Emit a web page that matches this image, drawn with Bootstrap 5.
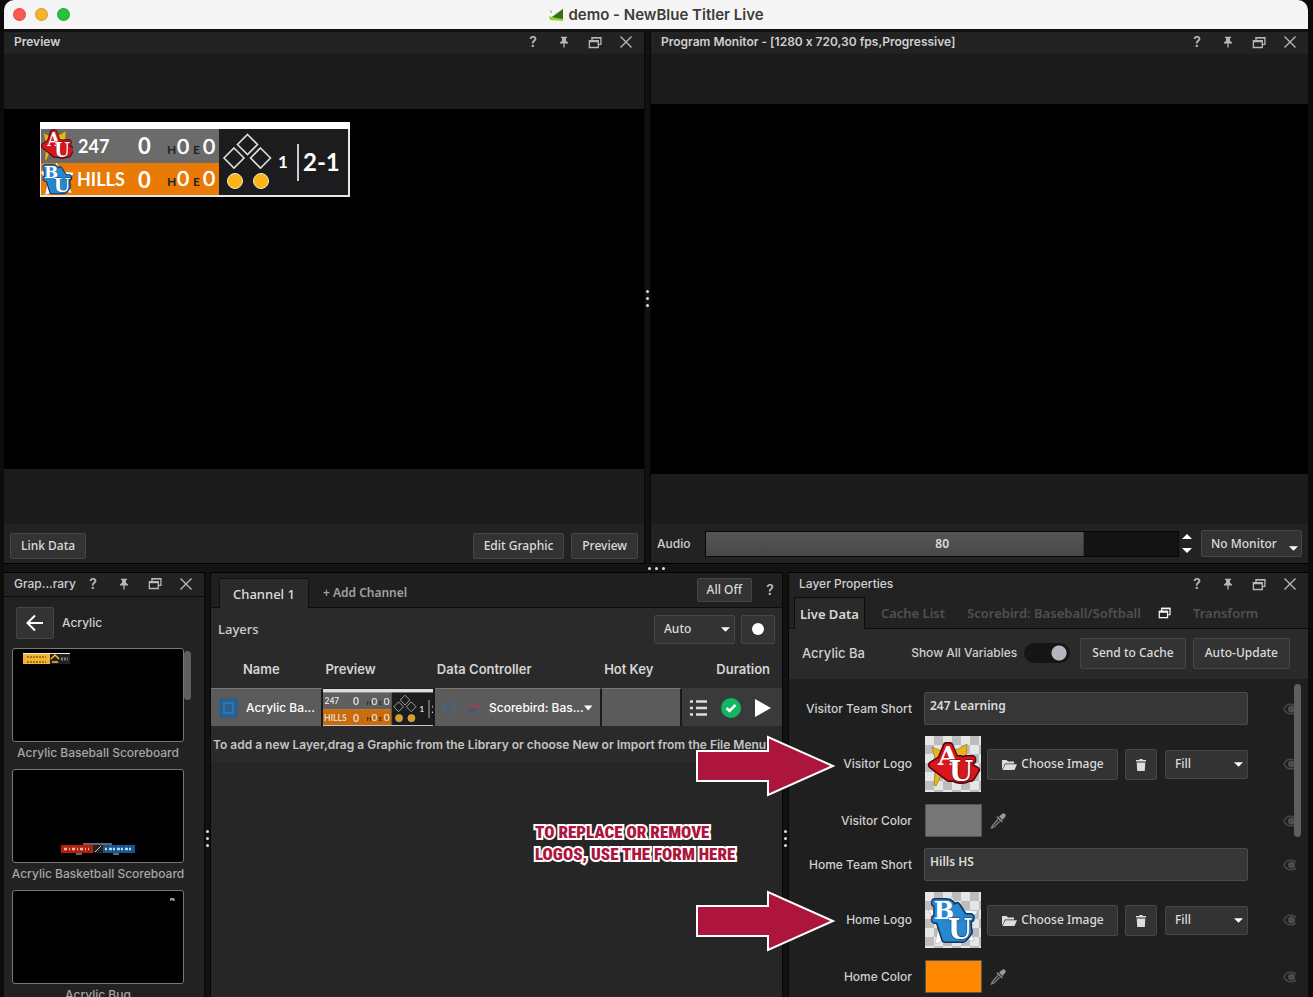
<!DOCTYPE html>
<html lang="en" data-bs-theme="dark">
<head>
<meta charset="utf-8">
<meta name="viewport" content="width=device-width, initial-scale=1">
<title>demo - NewBlue Titler Live</title>
<link href="https://cdn.jsdelivr.net/npm/bootstrap@5.3.0/dist/css/bootstrap.min.css" rel="stylesheet">
<style>
  :root { --ui: Inter, "Liberation Sans", sans-serif; --lucida: "Noto Sans", "Open Sans", sans-serif; }
  body { background: #0c0c0c; color: #cfcfcf; font: 500 12px/16px var(--ui); font-variant-ligatures: no-contextual; height: 100vh; overflow: hidden; }
  button, select, input { font: inherit; color: inherit; }
  .app { height: 100vh; margin: 0 5px 0 4px; }
  .titlebar { background: #f5f5f5; color: #3c3c3c; height: 29px; border-radius: 10px 10px 0 0; font-size: 15px; font-weight: 600; }
  .lights { left: 9px; top: 8px; gap: 9px; }
  .light { width: 13px; height: 13px; border-radius: 50%; border: 1px solid #0002; }
  .workspace { grid-template-rows: 532fr 8px 425fr; min-height: 0; padding-top: 3px; background: #111; }
  .top-row { grid-template-columns: 640fr 7px 657fr; min-height: 0; }
  .bottom-row { grid-template-columns: 200fr 7px 571fr 7px 519fr; min-height: 0; }
  .pane { background: #222; min-width: 0; min-height: 0; overflow: hidden; }
  .top-row .pane { border-bottom: 1px solid #000; }
  .bottom-row .pane { border-top: 1px solid #000; }
  .splitter { background: #111; border: solid #060606; border-width: 0 1px; }
  .low-dots { padding-top: 258px; }
  .hsplitter { background: #131313; }
  .dots { gap: 4px; }
  .dots i { width: 3px; height: 3px; border-radius: 50%; background: #ddd; }
  .pane-head { height: 22px; padding: 0 10px 2px; font-weight: 600; line-height: 20px; }
  .lib-head, .prop-head { height: 24px; font-weight: 500; }
  .lib-head { border-bottom: 1px solid #0a0a0a; }
  .tools { gap: 15px; }
  .icon-btn { width: 16px; height: 16px; padding: 0; border: 0; background: none; color: #b8b8b8; display: grid; place-items: center; font: 600 14px/16px var(--ui); }
  .stage { background: #1b1b1b; min-height: 0; }
  .screen { background: #000; width: 100%; aspect-ratio: 16 / 9; }
  .screen-pad { padding: 13px 36px; }
  .toolbar-row { height: 39px; gap: 7px; padding: 0 6px; }
  .left-tools { padding-top: 5px; }
  .key { font: 500 12px/16px var(--lucida); color: #dcdcdc; background: #333; border: 1px solid #464646; border-radius: 2px; padding: 4px 10px; }
  .key:hover { color: #fff; background: #3c3c3c; }
  .short { height: 24px; padding: 2px 9px; }
  .tall { height: 31px; padding: 4px 11px; }
  .pick { appearance: none; font: 500 12px/16px var(--lucida); color: #dcdcdc; border: 1px solid #464646; border-radius: 2px; padding: 4px 9px; height: 29px;
    background: #333 url("data:image/svg+xml,%3Csvg xmlns='http://www.w3.org/2000/svg' viewBox='0 0 10 5'%3E%3Cpath fill='%23fff' d='M0 0h10L5 5z'/%3E%3C/svg%3E") no-repeat right 4px center / 9px 5px; }
  .monitor-pick { width: 101px; height: 27px; background-position: right 3px bottom 5px; }
  .auto-pick { width: 81px; }
  .fill-pick { width: 83px; }
  .audio { height: 26px; border: 1px solid #080808; color: #dcdcdc; text-align: center; font: 600 12px/16px var(--lucida);
    background: linear-gradient(#555, #484848) 0 0 / var(--level) 100% no-repeat #131313; min-width: 0; }
  .spin { gap: 4px; width: 14px; margin-left: -6px; }
  .spin button { height: 10px; width: 10px; padding: 0; border: 0; background: none; display: grid; place-items: center; }
  .lib-body { padding: 10px 8px 0; }
  .back { width: 38px; height: 32px; padding: 0; display: grid; place-items: center; margin-left: 4px; }
  .thumbs { margin-top: 9px; width: 172px; }
  .thumb { height: 94px; background: #000; border: 1px solid #777; border-radius: 3px; }
  .thumb svg { display: block; width: 100%; height: 100%; }
  .thumbs figcaption { height: 27px; line-height: 22px; color: #a6a6a6; margin: 0 -6px; text-align: center; white-space: nowrap; }
  .sbar { width: 7px; border-radius: 4px; background: #5f5f5f; }
  .lib-sbar { height: 49px; margin-top: 12px; }
  .ch-bar { height: 35px; padding-left: 8px; border-bottom: 1px solid #0c0c0c; background: #1f1f1f; }
  .ch-tab { height: 30px; margin-bottom: -1px; padding: 0 13px; background: #2a2a2a; border: 1px solid #111; border-bottom: 0; font: 500 13px/28px var(--lucida); color: #dcdcdc; }
  .ch-add { border: 0; background: none; color: #a0a0a0; padding: 0 14px; height: 29px; font: 600 12px/30px var(--lucida); }
  .ch-help { margin: 0 4px 0 10px; }
  .layers { background: #2a2a2a; height: 154px; }
  .layer-head { height: 42px; padding: 0 7px; gap: 6px; font: 500 13px/16px var(--lucida); }
  .record { width: 34px; height: 29px; padding: 0; display: grid; place-items: center; }
  .grid-table { table-layout: fixed; width: 100%; border-collapse: separate; border-spacing: 0; }
  .grid-table th { height: 38px; padding: 0 2px; font-size: 13px; font-weight: 600; color: #d4d4d4; vertical-align: middle; white-space: nowrap; }
  .grid-table th:last-child { padding-right: 12px; }
  .grid-table td { height: 38px; padding: 0; background: #5b5b5b; border-right: 2px solid #1a1a1a; border-top: 1px solid #777; color: #fff; vertical-align: middle; white-space: nowrap; }
  .grid-table td:last-child { background: #3a3a3a; border-color: #3a3a3a; border-right: 0; padding-right: 3px; }
  .grid-table td:nth-child(2) { border-top: 0; background: #222; }
  .mini { display: block; width: 100%; height: 37px; opacity: .85; }
  .hint { white-space: nowrap; padding: 11px 2px 0; font-weight: 600; overflow: hidden; color: #c4c4c4; }
  .dark-fill { background: #262626; }
  .tabs { height: 32px; padding: 0 5px; gap: 10px; border-bottom: 1px solid #0c0c0c; font: 600 13px/16px var(--lucida); }
  .tabs button { border: 0; background: none; color: #505050; height: 31px; padding: 0 6px; white-space: nowrap; }
  .tabs .current { background: #2a2a2a; color: #d8d8d8; border: 1px solid #0c0c0c; border-bottom: 0; height: 32px; margin-bottom: -1px; padding: 0 5px; }
  .prop-bar { height: 50px; background: #2a2a2a; padding: 0 18px 2px 13px; gap: 7px; white-space: nowrap; }
  .bar-name { font-size: 13px; }
  .switch { appearance: none; width: 46px; height: 20px; border-radius: 10px; margin: 0 3px 0 0; background: radial-gradient(circle at 35px 10px, #b3b7bd 7px, #151515 8px); }
  .form-area { background: #1f1f1f; padding-top: 13px; }
  .fields { display: grid; row-gap: 12px; }
  .field { display: grid; grid-template-columns: 123px 1fr 48px; column-gap: 12px; align-items: center; height: 32px; }
  .logo-field { height: 56px; }
  .field > label, .field > .field-name { text-align: right; white-space: nowrap; }
  .field > svg { justify-self: end; margin-right: 12px; }
  .entry { width: 100%; height: 33px; padding: 0 5px 6px; background: #363636; border: 1px solid #4a4a4a; border-radius: 2px; font: 600 12px/16px var(--lucida); color: #dcdcdc; }
  .logo-pic { width: 56px; height: 56px; margin: 0 6px 0 1px; flex: none;
    background: repeating-conic-gradient(#bdbdbd 0 25%, #e6e6e6 0 50%) 0 0 / 18px 18px; }
  .choose { width: 131px; padding: 0; margin-right: 7px; }
  .trash { width: 32px; padding: 0; }
  .swatch { width: 57px; height: 33px; border: 1px solid #555; padding: 0; margin-left: 1px; background: var(--c); }
  .form-sbar { right: 7px; top: 5px; height: 153px; }
  .callout-arrow { width: 142px; height: 64px; right: 472px; }
  .arrow-a { top: 162px; }
  .arrow-b { top: 317px; }
  .callout-note { left: 531px; top: 249px; color: #ad153c; font: 900 17px/22px "Roboto Condensed", "Liberation Sans Narrow", sans-serif; white-space: nowrap; text-transform: uppercase;
    -webkit-text-stroke: 4px #fff; paint-order: stroke fill; }
</style>
</head>
<body>
<svg width="0" height="0" class="position-absolute" aria-hidden="true">
  <defs>
    <symbol id="pin" viewBox="0 0 16 16"><path fill="currentColor" d="M4.500 2h7v1.500h-1.300v3.200l2.300 1.600v1.400H8.700v4.500H7.300V9.700H3.500V8.300l2.300-1.600V3.500H4.500z"/></symbol>
    <symbol id="restore" viewBox="0 0 16 16"><path fill="none" stroke="currentColor" stroke-width="1.400" d="M2 6h9.500v7.300H2zM4.800 5.500V2.700h9.500V10h-2.500"/><path fill="currentColor" d="M2 5.500h9.500v2.300H2zM4.500 2h10v1.800h-10z"/></symbol>
    <symbol id="close" viewBox="0 0 16 16"><path fill="none" stroke="currentColor" stroke-width="1.400" d="M2.500 2.500l11 11M13.500 2.500l-11 11"/></symbol>
    <symbol id="eye" viewBox="0 0 16 12"><path fill="none" stroke="#4c4c4c" stroke-width="1.400" d="M1 6c3-6.500 11-6.500 14 0c-3 6.500-11 6.500-14 0z"/><circle cx="8.500" cy="6" r="3.500" fill="#4c4c4c"/></symbol>
    <symbol id="folder" viewBox="0 0 16 12"><path fill="#ddd" d="M1 9.500V1h4.500l1.500 1.500h6v2H4L1.800 9.500zM4.500 5.300H16l-2.500 5.700H1.500z"/></symbol>
    <symbol id="bin" viewBox="0 0 12 14"><path fill="#ddd" d="M1 2h3l.7-1h2.600L8 2h3v1.500H1zM1.700 4.500h8.600L9.800 13H2.200z"/></symbol>
    <symbol id="dropper" viewBox="0 0 16 16"><path fill="#999" d="M9 3.500l3.500 3.500 2.500-3a2 2 0 0 0-3-3z"/><path fill="#999" d="M7.500 3.200l5.300 5.300-1 1L6.500 4.200z"/><path fill="none" stroke="#888" stroke-width="1.200" d="M8 6.500l-5.500 6L1.500 15l2.500-1 5.700-5.700"/></symbol>
    <symbol id="logo-au" viewBox="0 0 56 56">
      <path fill="#e9b51c" stroke="#8d6a12" stroke-width=".6" d="M7 11l12 5 14-3 9-5-1 14 3 12-28 6-5 10-2-1 1-11 2-8z"/>
      <g font-family="DejaVu Serif, serif" font-weight="700" text-anchor="middle" stroke-linejoin="round">
        <g fill="#4d0407" stroke="#4d0407" stroke-width="8"><text x="23" y="29" font-size="26">A</text><text x="36" y="44" font-size="27">U</text><path d="M7 29l10-6 20 4 14 7-5 8H24z"/></g>
        <g fill="#d9161d" stroke="#d9161d" stroke-width="5"><text x="23" y="29" font-size="26">A</text><text x="36" y="44" font-size="27">U</text><path d="M7 29l10-6 20 4 14 7-5 8H24z"/></g>
        <text x="23" y="29" font-size="26" fill="#fff">A</text>
        <text x="36" y="45" font-size="28" fill="#fff" stroke="#7d0a0e" stroke-width="1.500" paint-order="stroke">U</text>
      </g>
    </symbol>
    <symbol id="logo-bu" viewBox="0 0 56 56">
      <path fill="#fff" stroke="#9aa" stroke-width=".5" d="M27 4l6 14 20 1-10 13 6 17-18-4-21 7 4-19L3 18l18-1z"/>
      <g font-family="DejaVu Serif, serif" font-weight="700" text-anchor="middle" stroke-linejoin="round">
        <g fill="#0e335e" stroke="#0e335e" stroke-width="8"><text x="19" y="28" font-size="24">B</text><text x="34" y="46" font-size="28">U</text><path d="M14 28l18-14 9 14 3 12-6 7H20z"/></g>
        <g fill="#2787cf" stroke="#2787cf" stroke-width="5"><text x="19" y="28" font-size="24">B</text><text x="34" y="46" font-size="28">U</text><path d="M14 28l18-14 9 14 3 12-6 7H20z"/></g>
        <text x="19" y="27" font-size="24" fill="#fff">B</text>
        <text x="35" y="47" font-size="28" fill="#fff" stroke="#123f73" stroke-width="1.200" paint-order="stroke">U</text>
      </g>
    </symbol>
    <g id="scorebug">
      <rect width="310" height="75" fill="#e8e8e8"/><rect width="310" height="7" fill="#fff"/>
      <rect x="1" y="7" width="178" height="34" fill="#6b6b6b"/>
      <rect x="1" y="41" width="178" height="32" fill="#e87a05"/>
      <rect x="179" y="7" width="129" height="66" fill="#1c1b1e"/>
      <svg x="1" y="7" width="32" height="33" viewBox="3 5 50 47" preserveAspectRatio="none"><use href="#logo-au" width="56" height="56"/></svg>
      <svg x="1" y="41" width="32" height="32" viewBox="4 5 47 47" preserveAspectRatio="none"><use href="#logo-bu" width="56" height="56"/></svg>
      <g font-family="Lato, sans-serif" font-weight="700" fill="#fff" font-size="18">
        <text x="38" y="31">247</text><text x="37" y="64">HILLS</text>
        <g font-size="22"><text x="98" y="32">0</text><text x="98" y="66">0</text></g>
        <g font-size="21" font-weight="400" stroke="#fff" stroke-width=".5"><text x="137" y="32">0</text><text x="163" y="32">0</text><text x="137" y="64">0</text><text x="163" y="64">0</text></g>
        <g font-size="12" fill="#222"><text x="127" y="32">H</text><text x="153" y="32">E</text><text x="127" y="64">H</text><text x="153" y="64">E</text></g>
        <text x="238" y="46" font-size="17">1</text><text x="263" y="49" font-size="24">2-1</text>
      </g>
      <path fill="none" stroke="#ddd" stroke-width="1.600" d="M207.500 12.500l10 10-10 10-10-10zM194 26l10 10-10 10-10-10zM220.500 26l10 10-10 10-10-10z"/>
      <circle cx="195" cy="59" r="7.500" fill="#fdb515" stroke="#f5ead0"/><circle cx="221" cy="59" r="7.500" fill="#fdb515" stroke="#f5ead0"/>
      <path stroke="#ccc" stroke-width="2" d="M258 22v37"/>
    </g>
  </defs>
</svg>

<div class="app d-flex flex-column">
  <header class="titlebar position-relative d-flex align-items-center justify-content-center flex-shrink-0">
    <div class="lights position-absolute d-flex">
      <span class="light" style="background:#fc5753"></span><span class="light" style="background:#f6b42c"></span><span class="light" style="background:#28c13e"></span>
    </div>
    <svg width="16" height="14" viewBox="0 0 16 14" class="me-1"><path fill="#8fd42f" d="M1 8l3 1 11-8v12L2 12z"/><path fill="#35701d" d="M15 1v10l-7-1-4-1z"/><path fill="#4a8f26" d="M2 2l2 2-1 1z"/></svg>
    <span>demo - NewBlue Titler Live</span>
  </header>

  <main class="workspace d-grid flex-fill">
    <div class="top-row d-grid">
      <section class="pane d-flex flex-column">
        <div class="pane-head d-flex align-items-center justify-content-between flex-shrink-0">
          <span>Preview</span>
          <div class="tools d-flex">
            <button class="icon-btn" aria-label="Help">?</button>
            <button class="icon-btn" aria-label="Pin"><svg width="14" height="14"><use href="#pin"/></svg></button>
            <button class="icon-btn" aria-label="Restore"><svg width="16" height="15"><use href="#restore"/></svg></button>
            <button class="icon-btn" aria-label="Close"><svg width="16" height="16"><use href="#close"/></svg></button>
          </div>
        </div>
        <div class="stage d-flex align-items-center flex-fill">
          <div class="screen screen-pad"><svg width="310" height="75" viewBox="0 0 310 75" class="d-block"><use href="#scorebug"/></svg></div>
        </div>
        <div class="toolbar-row left-tools d-flex align-items-center flex-shrink-0">
          <button class="key me-auto">Link Data</button>
          <button class="key">Edit Graphic</button>
          <button class="key">Preview</button>
        </div>
      </section>
      <div class="splitter dots d-flex flex-column align-items-center justify-content-center"><i></i><i></i><i></i></div>
      <section class="pane d-flex flex-column">
        <div class="pane-head d-flex align-items-center justify-content-between flex-shrink-0">
          <span>Program Monitor - [1280 x 720,30 fps,Progressive]</span>
          <div class="tools d-flex">
            <button class="icon-btn" aria-label="Help">?</button>
            <button class="icon-btn" aria-label="Pin"><svg width="14" height="14"><use href="#pin"/></svg></button>
            <button class="icon-btn" aria-label="Restore"><svg width="16" height="15"><use href="#restore"/></svg></button>
            <button class="icon-btn" aria-label="Close"><svg width="16" height="16"><use href="#close"/></svg></button>
          </div>
        </div>
        <div class="stage d-flex align-items-center flex-fill"><div class="screen"></div></div>
        <div class="toolbar-row d-flex align-items-center flex-shrink-0">
          <label for="audio" class="me-2">Audio</label>
          <input id="audio" class="audio flex-fill" value="80" style="--level:80%">
          <div class="spin d-flex flex-column align-items-center flex-shrink-0">
            <button aria-label="Louder"><svg width="10" height="5" viewBox="0 0 10 5"><path fill="#fff" d="M0 5h10L5 0z"/></svg></button>
            <button aria-label="Quieter"><svg width="10" height="5" viewBox="0 0 10 5"><path fill="#fff" d="M0 0h10L5 5z"/></svg></button>
          </div>
          <select class="pick monitor-pick" aria-label="Monitor"><option>No Monitor</option></select>
        </div>
      </section>
    </div>

    <div class="hsplitter dots d-flex align-items-center justify-content-center"><i></i><i></i><i></i></div>

    <div class="bottom-row d-grid position-relative">
      <section class="pane">
        <div class="pane-head lib-head d-flex align-items-center justify-content-between">
          <span>Grap...rary</span>
          <div class="tools d-flex">
            <button class="icon-btn" aria-label="Help">?</button>
            <button class="icon-btn" aria-label="Pin"><svg width="14" height="14"><use href="#pin"/></svg></button>
            <button class="icon-btn" aria-label="Restore"><svg width="16" height="15"><use href="#restore"/></svg></button>
            <button class="icon-btn" aria-label="Close"><svg width="16" height="16"><use href="#close"/></svg></button>
          </div>
        </div>
        <div class="lib-body">
          <div class="d-flex align-items-center">
            <button class="key back me-2" aria-label="Back"><svg width="18" height="18" viewBox="0 0 18 18"><path fill="none" stroke="#fff" stroke-width="2" d="M17 9H2M9 1.500L1.500 9 9 16.500"/></svg></button>
            <span>Acrylic</span>
          </div>
          <div class="d-flex">
            <div class="thumbs">
              <figure class="m-0"><div class="thumb"><svg viewBox="0 0 170 92"><path fill="#eee" d="M10 4h47v1H10z"/><path fill="#f3b436" d="M10 5h27v10H10z"/><path fill="#222" d="M37 5h20v10H37z"/><path stroke="#a8741a" stroke-width="2" stroke-dasharray="2 1" d="M14 8h19M14 13h19"/><path stroke="#f3c436" stroke-width="1.500" fill="none" d="M38 10l4-4 4 4M39 13h6"/><path stroke="#777" stroke-width="3" stroke-dasharray="2 1" d="M48 10h7"/></svg></div><figcaption>Acrylic Baseball Scoreboard</figcaption></figure>
              <figure class="m-0"><div class="thumb"><svg viewBox="0 0 170 92"><path fill="#666" d="M70 73h29v3H70z"/><path fill="#b3200f" d="M48 75h32v8H48z"/><path fill="#17558f" d="M90 75h32v8H90z"/><path fill="#222" d="M80 75h10v8H80z"/><path stroke="#f5bba6" stroke-width="2.500" stroke-dasharray="3 2 1 2" d="M51 79h25"/><path stroke="#a9dcff" stroke-width="2.500" stroke-dasharray="2 2 3 1" d="M92 79h28"/><path stroke="#ccc" d="M82 82l6-6M63 84h6M100 84h6"/></svg></div><figcaption>Acrylic Basketball Scoreboard</figcaption></figure>
              <figure class="m-0"><div class="thumb"><svg viewBox="0 0 170 92"><path fill="#999" d="M157 7h4l1 3h-2l-1-1-2 1z"/></svg></div><figcaption>Acrylic Bug</figcaption></figure>
            </div>
            <div class="sbar lib-sbar"></div>
          </div>
        </div>
      </section>
      <div class="splitter dots low-dots d-flex flex-column align-items-center"><i></i><i></i><i></i></div>
      <section class="pane d-flex flex-column">
        <div class="ch-bar d-flex align-items-end flex-shrink-0">
          <button class="ch-tab">Channel 1</button>
          <button class="ch-add me-auto">+ Add Channel</button>
          <button class="key short align-self-center">All Off</button>
          <button class="icon-btn ch-help align-self-center" aria-label="Help">?</button>
        </div>
        <div class="layers flex-shrink-0">
          <div class="layer-head d-flex align-items-center">
            <span class="me-auto">Layers</span>
            <select class="pick auto-pick" aria-label="Mode"><option>Auto</option></select>
            <button class="key record" aria-label="Record"><svg width="12" height="12" viewBox="0 0 12 12"><circle cx="6" cy="6" r="6" fill="#fff"/></svg></button>
          </div>
          <table class="grid-table">
            <colgroup><col style="width:19.700%"><col style="width:19.500%"><col style="width:29.300%"><col style="width:14%"><col></colgroup>
            <thead><tr><th class="ps-4"><span class="ps-2">Name</span></th><th>Preview</th><th>Data Controller</th><th>Hot Key</th><th class="text-end">Duration</th></tr></thead>
            <tbody><tr>
              <td><div class="d-flex align-items-center gap-2 ps-2"><svg width="19" height="20" viewBox="0 0 19 20"><rect width="19" height="20" rx="4" fill="#2d5f8c"/><rect x="5" y="5" width="9" height="10" fill="none" stroke="#2878b8" stroke-width="2"/></svg><span>Acrylic Ba...</span></div></td>
              <td><svg class="mini" viewBox="35 0 230 75" preserveAspectRatio="none"><use href="#scorebug"/></svg></td>
              <td><div class="d-flex align-items-center ps-2 pe-2"><svg width="14" height="14" viewBox="0 0 14 14"><circle cx="7" cy="7" r="5.500" fill="none" stroke="#3b6a94" stroke-width="1.500"/><path d="M4 7l2 2 4-4" stroke="#3b6a94" fill="none"/></svg><svg width="22" height="12" viewBox="0 0 22 12" class="ms-2 me-1"><path fill="#8c4352" d="M1 8c4-6 10-7 20-7-5 2-7 4-12 4-4 0-6 2-8 3z"/><path fill="#44508a" d="M3 11c4-4 7-4 12-5-3 3-7 4-12 5z"/></svg><span class="ms-auto">Scorebird: Bas...</span><svg width="9" height="6" viewBox="0 0 10 6"><path fill="#fff" d="M0 0h10L5 6z"/></svg></div></td>
              <td></td>
              <td><div class="d-flex align-items-center justify-content-between ps-2 pe-2"><svg width="18" height="18" viewBox="0 0 18 18"><path stroke="#ddd" stroke-width="2.500" d="M0 2.500h3M6 2.500h11M0 9h3M6 9h11M0 15.500h3M6 15.500h11"/></svg><svg width="20" height="20" viewBox="0 0 20 20"><circle cx="10" cy="10" r="10" fill="#12b562"/><path fill="none" stroke="#fff" stroke-width="2.500" d="M5.500 10l3 3 6-6"/></svg><svg width="18" height="18" viewBox="0 0 18 18"><path fill="#fff" d="M2 0l16 9-16 9z"/></svg></div></td>
            </tr></tbody>
          </table>
          <div class="hint">To add a new Layer,drag a Graphic from the Library or choose New or Import from the File Menu</div>
        </div>
        <div class="dark-fill flex-fill"></div>
      </section>
      <div class="splitter dots low-dots d-flex flex-column align-items-center"><i></i><i></i><i></i></div>
      <section class="pane d-flex flex-column">
        <div class="pane-head prop-head d-flex align-items-center justify-content-between flex-shrink-0">
          <span>Layer Properties</span>
          <div class="tools d-flex">
            <button class="icon-btn" aria-label="Help">?</button>
            <button class="icon-btn" aria-label="Pin"><svg width="14" height="14"><use href="#pin"/></svg></button>
            <button class="icon-btn" aria-label="Restore"><svg width="16" height="15"><use href="#restore"/></svg></button>
            <button class="icon-btn" aria-label="Close"><svg width="16" height="16"><use href="#close"/></svg></button>
          </div>
        </div>
        <div class="tabs d-flex align-items-end flex-shrink-0">
          <button class="current">Live Data</button>
          <button>Cache List</button>
          <button>Scorebird: Baseball/Softball</button>
          <span class="icon-btn align-self-center text-light"><svg width="15" height="14"><use href="#restore"/></svg></span>
          <button class="ms-1">Transform</button>
        </div>
        <div class="prop-bar d-flex align-items-center flex-shrink-0">
          <span class="me-auto bar-name">Acrylic Ba</span>
          <label for="showall">Show All Variables</label>
          <input id="showall" type="checkbox" class="switch" checked>
          <button class="key tall">Send to Cache</button>
          <button class="key tall">Auto-Update</button>
        </div>
        <div class="form-area flex-fill position-relative">
          <form class="fields">
            <div class="field"><label for="vts">Visitor Team Short</label><input id="vts" class="entry" value="247 Learning"><svg width="13" height="12"><use href="#eye" width="16" height="12"/></svg></div>
            <div class="field logo-field"><span class="field-name">Visitor Logo</span>
              <div class="d-flex align-items-center"><svg class="logo-pic"><use href="#logo-au"/></svg><button type="button" class="key tall choose"><svg width="16" height="12" class="me-1"><use href="#folder"/></svg>Choose Image</button><button type="button" class="key tall trash" aria-label="Delete visitor logo"><svg width="12" height="14"><use href="#bin"/></svg></button><select class="pick fill-pick ms-auto" aria-label="Visitor logo fit"><option>Fill</option></select></div>
              <svg width="13" height="12"><use href="#eye" width="16" height="12"/></svg></div>
            <div class="field"><span class="field-name">Visitor Color</span>
              <div class="d-flex align-items-center gap-2"><button type="button" class="swatch" style="--c:#777" aria-label="Visitor color"></button><svg width="16" height="16"><use href="#dropper"/></svg></div>
              <svg width="13" height="12"><use href="#eye" width="16" height="12"/></svg></div>
            <div class="field"><label for="hts">Home Team Short</label><input id="hts" class="entry" value="Hills HS"><svg width="13" height="12"><use href="#eye" width="16" height="12"/></svg></div>
            <div class="field logo-field"><span class="field-name">Home Logo</span>
              <div class="d-flex align-items-center"><svg class="logo-pic"><use href="#logo-bu"/></svg><button type="button" class="key tall choose"><svg width="16" height="12" class="me-1"><use href="#folder"/></svg>Choose Image</button><button type="button" class="key tall trash" aria-label="Delete home logo"><svg width="12" height="14"><use href="#bin"/></svg></button><select class="pick fill-pick ms-auto" aria-label="Home logo fit"><option>Fill</option></select></div>
              <svg width="13" height="12"><use href="#eye" width="16" height="12"/></svg></div>
            <div class="field"><span class="field-name">Home Color</span>
              <div class="d-flex align-items-center gap-2"><button type="button" class="swatch" style="--c:#ff8800" aria-label="Home color"></button><svg width="16" height="16"><use href="#dropper"/></svg></div>
              <svg width="13" height="12"><use href="#eye" width="16" height="12"/></svg></div>
          </form>
          <div class="sbar form-sbar position-absolute"></div>
        </div>
      </section>

      <svg class="callout-arrow arrow-a position-absolute" viewBox="0 0 142 64"><path fill="#ad153c" stroke="#fff" stroke-width="2" d="M3 17h71V3l65 29-65 29V47H3z"/></svg>
      <svg class="callout-arrow arrow-b position-absolute" viewBox="0 0 142 64"><path fill="#ad153c" stroke="#fff" stroke-width="2" d="M3 17h71V3l65 29-65 29V47H3z"/></svg>
      <div class="callout-note position-absolute">To replace or remove<br>logos, use the form here</div>
    </div>
  </main>
</div>
<script src="https://cdn.jsdelivr.net/npm/bootstrap@5.3.0/dist/js/bootstrap.bundle.min.js"></script>
</body>
</html>
